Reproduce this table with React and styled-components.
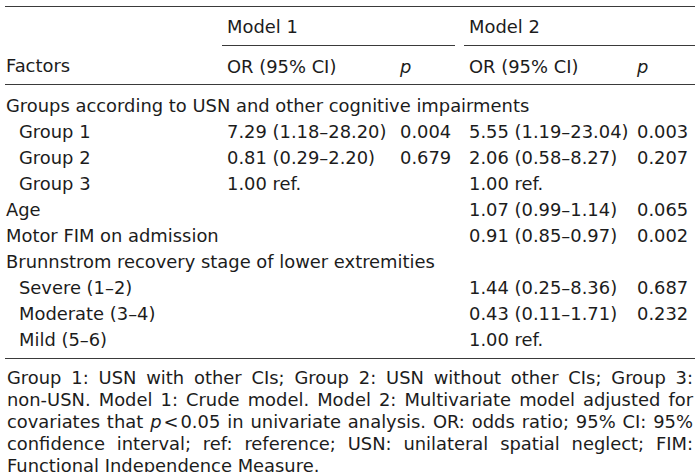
import React from "react";
import styled, { createGlobalStyle } from "styled-components";

const GlobalStyle = createGlobalStyle`
  html, body {
    margin: 0;
    padding: 0;
    background: #ffffff;
  }
  body {
    font-family: "DejaVu Sans", Verdana, sans-serif;
    color: #1c1c1c;
  }
`;

const ruleColor = "#3a3a3a";

const Page = styled.div`
  width: 700px;
  padding: 6px 5px 0 5px;
  box-sizing: border-box;
`;

const Table = styled.table`
  width: 690px;
  border-collapse: collapse;
  table-layout: fixed;
  font-size: 17.9px;
  border-top: 1.5px solid ${ruleColor};
  border-bottom: 1.5px solid ${ruleColor};
`;

const HeadCell = styled.th`
  font-weight: normal;
  text-align: left;
  vertical-align: middle;
  padding: ${p => (p.$low ? 2 : 1)}px 0 0 ${p => (p.$first ? 1 : 5)}px;
  height: 39px;
  box-sizing: border-box;
  white-space: nowrap;
  border-bottom: ${p => (p.$ruled ? `1.5px solid ${ruleColor}` : "none")};
`;

const BodyRow = styled.tr`
  &:first-child td {
    padding-top: 8px;
  }
  &:last-child td {
    padding-bottom: 5px;
  }
`;

const Cell = styled.td`
  height: 26px;
  line-height: 26px;
  padding: 0 0 0 ${p => (p.$first ? (p.$indent ? 14 : 1) : 5)}px;
  white-space: nowrap;
  vertical-align: middle;
`;

const P = styled.i`
  font-style: italic;
`;

const Lt = styled.span`
  margin: 0 2px;
`;

const NoBreak = styled.span`
  white-space: nowrap;
`;

const Note = styled.p`
  margin: 8px 2px 0 2px;
  font-size: 17.9px;
  line-height: 22px;
  text-align: justify;
`;

const rows = [
  { label: "Groups according to USN and other cognitive impairments", span: true },
  { label: "Group 1", indent: true, m1: "7.29 (1.18\u201328.20)", p1: "0.004", m2: "5.55 (1.19\u201323.04)", p2: "0.003" },
  { label: "Group 2", indent: true, m1: "0.81 (0.29\u20132.20)", p1: "0.679", m2: "2.06 (0.58\u20138.27)", p2: "0.207" },
  { label: "Group 3", indent: true, m1: "1.00 ref.", p1: "", m2: "1.00 ref.", p2: "" },
  { label: "Age", m1: "", p1: "", m2: "1.07 (0.99\u20131.14)", p2: "0.065" },
  { label: "Motor FIM on admission", m1: "", p1: "", m2: "0.91 (0.85\u20130.97)", p2: "0.002" },
  { label: "Brunnstrom recovery stage of lower extremities", span: true },
  { label: "Severe (1\u20132)", indent: true, m1: "", p1: "", m2: "1.44 (0.25\u20138.36)", p2: "0.687" },
  { label: "Moderate (3\u20134)", indent: true, m1: "", p1: "", m2: "0.43 (0.11\u20131.71)", p2: "0.232" },
  { label: "Mild (5\u20136)", indent: true, m1: "", p1: "", m2: "1.00 ref.", p2: "" }
];

export default function App() {
  return (
    <Page>
      <GlobalStyle />
      <Table>
        <colgroup>
          <col style={{ width: 217 }} />
          <col style={{ width: 173 }} />
          <col style={{ width: 60 }} />
          <col style={{ width: 9 }} />
          <col style={{ width: 168 }} />
          <col style={{ width: 63 }} />
        </colgroup>
        <thead>
          <tr>
            <HeadCell $first />
            <HeadCell colSpan={2} $ruled>Model 1</HeadCell>
            <HeadCell />
            <HeadCell colSpan={2} $ruled>Model 2</HeadCell>
          </tr>
          <tr>
            <HeadCell $first $ruled $low>Factors</HeadCell>
            <HeadCell $ruled $low>OR (95% CI)</HeadCell>
            <HeadCell $ruled $low><P>p</P></HeadCell>
            <HeadCell $ruled $low />
            <HeadCell $ruled $low>OR (95% CI)</HeadCell>
            <HeadCell $ruled $low><P>p</P></HeadCell>
          </tr>
        </thead>
        <tbody>
          {rows.map(r =>
            r.span ? (
              <BodyRow key={r.label}>
                <Cell $first colSpan={6}>{r.label}</Cell>
              </BodyRow>
            ) : (
              <BodyRow key={r.label}>
                <Cell $first $indent={r.indent}>{r.label}</Cell>
                <Cell>{r.m1}</Cell>
                <Cell>{r.p1}</Cell>
                <Cell />
                <Cell>{r.m2}</Cell>
                <Cell>{r.p2}</Cell>
              </BodyRow>
            )
          )}
        </tbody>
      </Table>
      <Note>
        Group 1: USN with other CIs; Group 2: USN without other CIs; Group 3:{" "}
        <NoBreak>non-USN.</NoBreak> Model 1: Crude model. Model 2: Multivariate model adjusted for
        covariates that <NoBreak><P>p</P><Lt>&lt;</Lt>0.05</NoBreak> in univariate analysis. OR: odds ratio; 95% CI: 95%
        confidence interval; ref: reference; USN: unilateral spatial neglect; FIM:
        Functional Independence Measure.
      </Note>
    </Page>
  );
}
